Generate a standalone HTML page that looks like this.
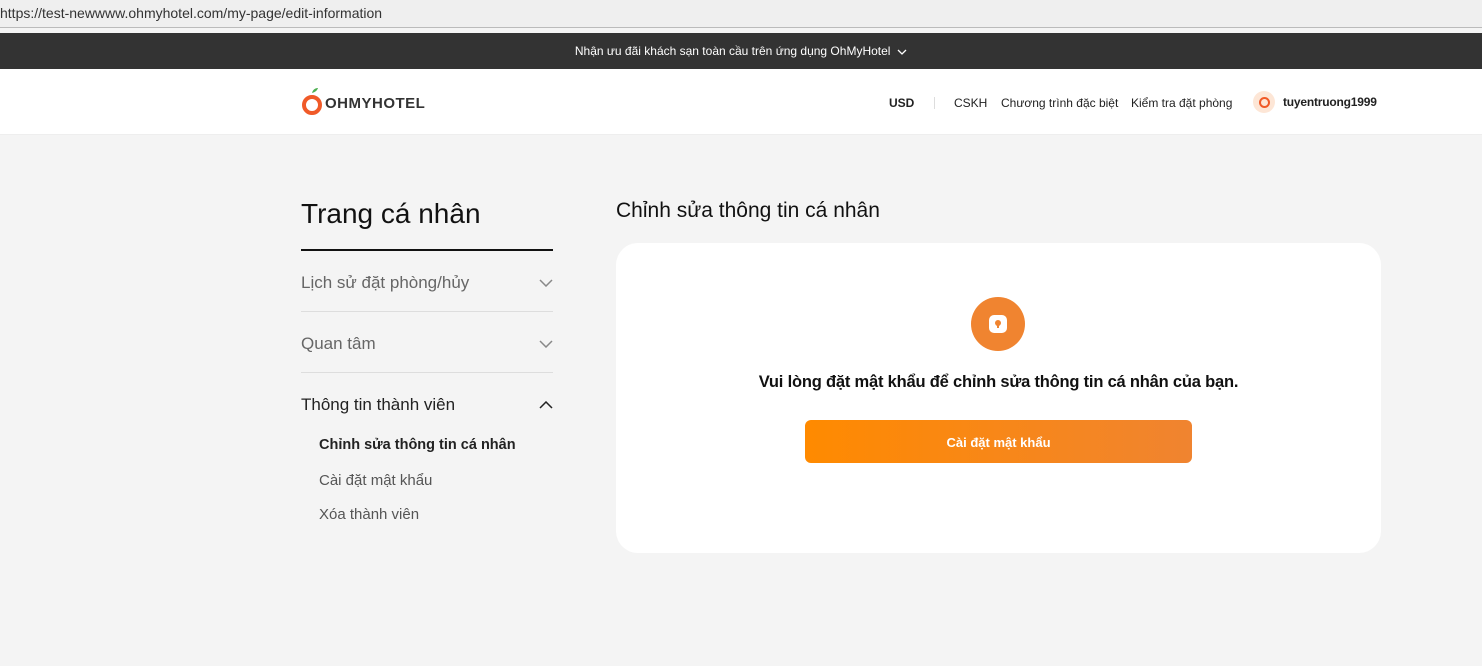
<!DOCTYPE html>
<html><head><meta charset="utf-8"><style>
*{margin:0;padding:0;box-sizing:border-box}
body{width:1482px;height:666px;overflow:hidden;background:#f4f4f4;font-family:"Liberation Sans",sans-serif;position:relative}
.url{position:absolute;left:0;top:0;width:1482px;height:28px;background:#efefef;border-bottom:1px solid #bbb;font-size:14px;color:#333;padding:5px 0 0 0}
.gap{position:absolute;top:29px;left:0;width:1482px;height:4px;background:#f4f4f4}
.top{position:absolute;top:33px;left:0;width:1482px;height:36px;background:#333;color:#fff;font-size:12px;text-align:center;line-height:36px}
.hdr{position:absolute;top:69px;left:0;width:1482px;height:66px;background:#fff;border-bottom:1px solid #eee}
.abs{position:absolute}
.nav{font-size:12px;color:#222;top:27px}
.side{position:absolute;left:301px;width:252px}
.item{font-size:17px;color:#666;height:61px;border-bottom:1px solid #ddd;display:flex;justify-content:space-between;align-items:center;padding-top:3px}
.sub{font-size:15px;color:#555;position:absolute;left:319px}
.card{position:absolute;left:616px;top:243px;width:765px;height:310px;background:#fff;border-radius:22px}
</style></head><body>
<div class="url">https://test-newwww.ohmyhotel.com/my-page/edit-information</div>
<div class="gap"></div>
<div class="top">Nhận ưu đãi khách sạn toàn cầu trên ứng dụng OhMyHotel &nbsp;<svg width="10" height="6" viewBox="0 0 10 6"><path d="M1 1l4 4 4-4" stroke="#fff" fill="none" stroke-width="1.3"/></svg></div>
<div class="hdr">
 <svg class="abs" style="left:301px;top:17px" width="22" height="30" viewBox="0 0 22 30"><path d="M11 7c1-4 4-5 6-5-1 3-3 4-6 5z" fill="#4caf50"/><circle cx="11" cy="19" r="8" fill="none" stroke="#f05a28" stroke-width="4"/></svg>
 <div class="abs" style="left:325px;top:26px;font-size:15px;font-weight:bold;color:#333;letter-spacing:0.5px">OHMYHOTEL</div>
 <div class="abs nav" style="left:889px;font-weight:bold">USD</div>
 <div class="abs" style="left:934px;top:28px;width:1px;height:12px;background:#ddd"></div>
 <div class="abs nav" style="left:954px">CSKH</div>
 <div class="abs nav" style="left:1001px">Chương trình đặc biệt</div>
 <div class="abs nav" style="left:1131px">Kiểm tra đặt phòng</div>
 <div class="abs" style="left:1253px;top:22px;width:22px;height:22px;border-radius:50%;background:#fde6d6"><div style="margin:6px 0 0 6px;width:11px;height:11px;border-radius:50%;border:2.5px solid #f05a28"></div></div>
 <div class="abs nav" style="left:1283px;font-weight:bold;top:26px;letter-spacing:-0.2px">tuyentruong1999</div>
</div>
<div class="abs" style="left:301px;top:198px;font-size:28px;color:#111">Trang cá nhân</div>
<div class="abs" style="left:301px;top:249px;width:252px;height:2px;background:#111"></div>
<div class="side" style="top:251px">
 <div class="item">Lịch sử đặt phòng/hủy <svg width="14" height="8" viewBox="0 0 14 8"><path d="M1 1l6 6 6-6" stroke="#888" fill="none" stroke-width="1.5"/></svg></div>
 <div class="item">Quan tâm <svg width="14" height="8" viewBox="0 0 14 8"><path d="M1 1l6 6 6-6" stroke="#888" fill="none" stroke-width="1.5"/></svg></div>
 <div class="item" style="border:none;color:#222">Thông tin thành viên <svg width="14" height="8" viewBox="0 0 14 8"><path d="M1 7l6-6 6 6" stroke="#222" fill="none" stroke-width="1.5"/></svg></div>
</div>
<div class="sub" style="top:437px;color:#222;font-weight:bold;font-size:14.5px">Chỉnh sửa thông tin cá nhân</div>
<div class="sub" style="top:472px">Cài đặt mật khẩu</div>
<div class="sub" style="top:506px">Xóa thành viên</div>
<div class="abs" style="left:616px;top:199px;font-size:21px;color:#111">Chỉnh sửa thông tin cá nhân</div>
<div class="card">
 <div class="abs" style="left:355px;top:54px;width:54px;height:54px;border-radius:50%;background:#f08430">
  <div style="position:absolute;left:18px;top:18px;width:18px;height:18px;border-radius:5px;background:#fff"><div style="margin:5px 0 0 6px;width:6px;height:6px;border-radius:50%;background:#f08430"></div><div style="margin:-2px 0 0 8px;width:2px;height:4px;background:#f08430"></div></div>
 </div>
 <div class="abs" style="left:0;width:765px;top:130px;text-align:center;font-size:16.5px;font-weight:bold;color:#111;letter-spacing:-0.2px">Vui lòng đặt mật khẩu để chỉnh sửa thông tin cá nhân của bạn.</div>
 <div class="abs" style="left:189px;top:177px;width:387px;height:43px;border-radius:6px;background:linear-gradient(90deg,#ff8a00,#f08430);color:#fff;font-size:13px;font-weight:bold;text-align:center;line-height:45px">Cài đặt mật khẩu</div>
</div>
</body></html>
